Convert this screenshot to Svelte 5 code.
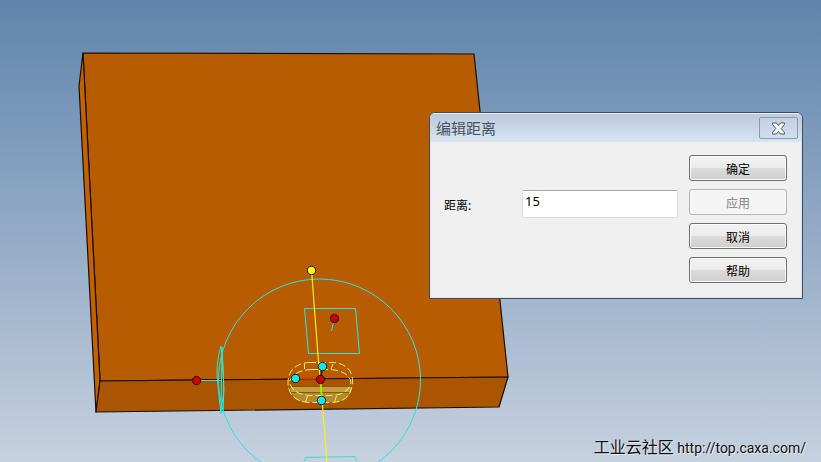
<script>
  let distance = $state('15');
  let open = $state(true);

  const faces = [
    { points: '83,53 474,54 508,377 100,381', fill: '#b75c00' },
    { points: '83,53 79,86 96,412 100,381', fill: '#c46200' },
    { points: '100,381 508,377 499,407 96,412', fill: '#aa5600' }
  ];

  const handles = [
    { x: 311.5, y: 270.5, fill: '#ffff10' },
    { x: 334.5, y: 318.5, fill: '#c40000' },
    { x: 196.5, y: 380.5, fill: '#d00000' },
    { x: 322.5, y: 366.5, fill: '#10e8f4' },
    { x: 295.5, y: 378.5, fill: '#10e8f4' },
    { x: 321.5, y: 400.5, fill: '#10e8f4' },
    { x: 320.5, y: 379.5, fill: '#c40000' }
  ];

  function close() {
    open = false;
  }
</script>

<main class="viewport">
  <svg class="model" viewBox="0 0 821 462" preserveAspectRatio="xMinYMin slice" aria-hidden="true">
    {#each faces as face (face.points)}
      <polygon points={face.points} fill={face.fill} stroke="#1a0f00" stroke-width="1.2" stroke-linejoin="round" />
    {/each}

    <!-- slot -->
    <path d="M290 387H352Q350 402 334 402H306Q291 401 290 387Z" fill="#b8892c" />
    <path d="M291 387H351V392H291Z" fill="#c99d3e" />
    <path d="M292 386.500H352M291 392.500H350" stroke="#7c5c14" fill="none" />
    <path d="M309 362.500H333Q352 364 352.500 381Q352 401 333 402.500H309Q288 401 288 382Q289 364 309 362.500Z" class="dashed" />
    <path d="M311 369.500H328Q348 370 351 382Q349 394 333 395.500H309Q292 394 289.500 382Q292 371 311 369.500Z" class="dashed" />
    <path d="M304.500 364V369M333 364L331 369M307.500 396L305.500 402M336.500 396L334.500 402" class="dashed" />

    <!-- rotation rings -->
    <g class="guide">
      <circle cx="319.500" cy="380" r="101" />
      <path d="M304.500 308.500H355.500L359.500 353.500H308.500Z" />
      <path d="M304 462L306 457.500L355 456.500L357 462" />
      <path d="M334.500 318L331.500 331M196 380.500H222" />
      <path d="M221 346Q215 365 218 386L221 414L222 347L224 390L221 412M221 346Q225 378 223 413" />
    </g>

    <!-- axes -->
    <path d="M311.500 270L318.500 362L320.500 380L327 462" class="axis" />
    <path d="M300 378.500H317" stroke="#ff2a00" stroke-width="1.5" />
    <path d="M320.500 383L321.500 397" stroke="#80ff00" stroke-width="1.5" />
    <path d="M322 369L321 377" stroke="#33204a" stroke-width="2" />

    {#each handles as handle (`${handle.x}-${handle.y}`)}
      <circle cx={handle.x} cy={handle.y} r="4.200" fill={handle.fill} stroke="#241400" />
    {/each}
  </svg>

  {#if open}
    <form class="dialog" aria-labelledby="dialog-title" onsubmit={(e) => e.preventDefault()}>
      <header class="titlebar">
        <h1 id="dialog-title">编辑距离</h1>
        <button type="button" class="close" aria-label="关闭" onclick={close}>
          <svg width="15" height="13" viewBox="0 0 15 13">
            <path
              d="M1.500 1H5.500L7.500 3.500L9.500 1H13.500V2.500L10.200 6.500L13.500 10.500V12H9.500L7.500 9.500L5.500 12H1.500V10.500L4.800 6.500L1.500 2.500Z"
              fill="#fff"
              stroke="#48566a"
              stroke-linejoin="round"
            />
          </svg>
        </button>
      </header>
      <div class="body">
        <div class="field">
          <label for="distance">距离:</label>
          <input id="distance" type="text" bind:value={distance} />
        </div>
        <div class="actions">
          <button type="submit">确定</button>
          <button type="button" disabled>应用</button>
          <button type="button" onclick={close}>取消</button>
          <button type="button">帮助</button>
        </div>
      </div>
    </form>
  {/if}

  <p class="watermark"><span>工业云社区</span> http://top.caxa.com/</p>
</main>

<style>
  :global(body) {
    margin: 0;
  }

  .viewport {
    position: relative;
    height: 100vh;
    overflow: hidden;
    background: linear-gradient(#6084ac, #c6d1e0);
    font-family: "Noto Sans", "Noto Sans CJK SC", sans-serif;
  }

  .model {
    display: block;
    width: 100%;
    height: 100%;
  }

  .guide {
    fill: none;
    stroke: #28e6dc;
  }

  .dashed {
    fill: none;
    stroke: #f4ee62;
    stroke-dasharray: 7 3;
  }

  .axis {
    fill: none;
    stroke: #fff200;
    stroke-width: 1.2;
  }

  .dialog {
    position: absolute;
    top: 112px;
    right: 18px;
    box-sizing: border-box;
    width: 374px;
    border: 1px solid #3f4c5e;
    border-radius: 6px 6px 0 0;
    background: #d9e4f1;
    overflow: hidden;
  }

  .titlebar {
    display: flex;
    align-items: center;
    justify-content: space-between;
    height: 29px;
    padding: 0 4px 0 6px;
    background: linear-gradient(#bccada, #d8e4f2);
    border-top: 1px solid #e6eef7;
    box-sizing: border-box;
  }

  h1 {
    margin: 0;
    color: #46525f;
    font-size: 15px;
    font-weight: 400;
    line-height: 20px;
  }

  .close {
    display: flex;
    align-items: center;
    justify-content: center;
    width: 39px;
    height: 22px;
    padding: 0;
    border: 1px solid #8799b8;
    border-radius: 2px;
    background: linear-gradient(#c4d1e2, #d2deed);
  }

  .body {
    display: flex;
    justify-content: space-between;
    gap: 11px;
    margin: 0 1px 1px;
    padding: 13px 14px 14px 13px;
    background: #f0f0f0;
  }

  .field {
    display: flex;
    flex: 1;
    align-items: flex-end;
    justify-content: space-between;
    align-self: flex-start;
    margin-top: 35px;
  }

  label {
    font-size: 12px;
    line-height: 24px;
    color: #000;
  }

  input {
    box-sizing: border-box;
    width: 156px;
    height: 28px;
    padding: 0 2px 6px;
    border: 1px solid #dcdcdc;
    border-top-color: #a4a6aa;
    border-radius: 2px;
    background: #fff;
    font-family: inherit;
    font-size: 13px;
  }

  .actions {
    display: flex;
    flex-direction: column;
    gap: 8px;
  }

  .actions button {
    width: 98px;
    height: 26px;
    padding: 2px 0 0;
    border: 1px solid #6f6f6f;
    border-radius: 3px;
    background: linear-gradient(#f3f3f3, #ebebeb 50%, #dcdcdc 50%, #cecece);
    box-shadow: inset 0 0 0 1px #fafafa;
    color: #000;
    font-family: inherit;
    font-size: 12px;
  }

  .actions button:disabled {
    border-color: #adb2b5;
    background: #f4f4f4;
    color: #838383;
  }

  .watermark {
    position: absolute;
    right: 15px;
    bottom: 4px;
    margin: 0;
    color: #111;
    font-family: Roboto, "Noto Sans CJK SC", sans-serif;
    font-size: 14px;
    line-height: 20px;
    text-shadow: 1px 1px 0 #e8edf4;
    white-space: nowrap;
  }

  .watermark span {
    font-size: 16px;
  }
</style>
